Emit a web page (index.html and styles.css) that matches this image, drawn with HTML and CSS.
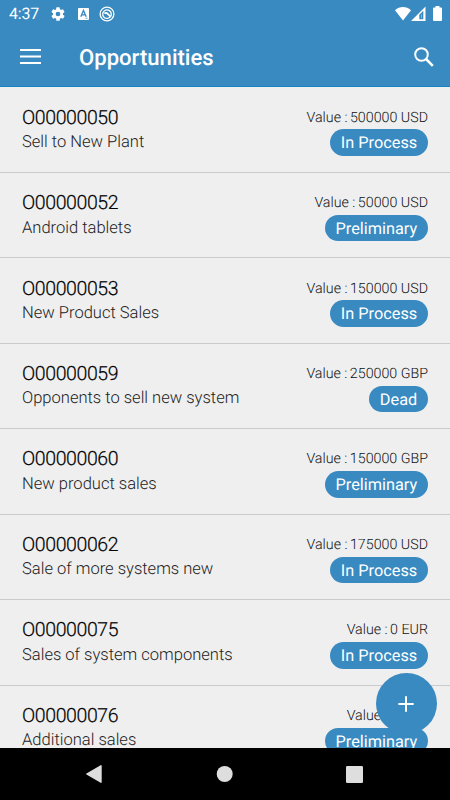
FILE: index.html
```html
<!DOCTYPE html>
<html lang="en">
<head>
    <meta charset="UTF-8">
    <meta name="viewport" content="width=device-width, initial-scale=1.0">
    <title>Opportunities</title>
    <link rel="stylesheet" href="styles.css">
</head>
<body>
    <div class="screen">
        <header class="header">
            <div class="status-bar">
                <span class="clock">4:37</span>
                <div class="notifications">
                    <svg width="16" height="16" viewBox="0 0 24 24" fill="#fff"><path d="M19.4 13a7.500 7.500 0 0 0 0-2l2.100-1.650a.5.5 0 0 0 .12-.64l-2-3.460a.5.5 0 0 0-.61-.22l-2.490 1a7.300 7.300 0 0 0-1.690-.98l-.38-2.650A.5.5 0 0 0 14 2h-4a.5.5 0 0 0-.49.42l-.38 2.650c-.61.25-1.170.58-1.690.98l-2.490-1a.5.5 0 0 0-.61.22l-2 3.460a.5.5 0 0 0 .12.64L4.600 11a7.500 7.500 0 0 0 0 2l-2.110 1.650a.5.5 0 0 0-.12.64l2 3.460c.12.22.39.3.61.22l2.490-1c.52.4 1.080.73 1.690.98l.38 2.650c.03.24.24.42.49.42h4c.25 0 .46-.18.49-.42l.38-2.650a7.300 7.300 0 0 0 1.690-.98l2.490 1c.23.09.49 0 .61-.22l2-3.460a.5.5 0 0 0-.12-.64L19.400 13zM12 15.500a3.500 3.500 0 1 1 0-7 3.500 3.500 0 0 1 0 7z"/></svg>
                    <svg width="11" height="12" viewBox="0 0 11 12"><rect width="11" height="12" rx="1" fill="#fff"/><path d="M2.800 8.800 5.500 2.500l2.700 6.300M3.800 6.800h3.400" fill="none" stroke="#388ac1" stroke-width="1.300"/><path d="M7.500 10.200h2" stroke="#388ac1" stroke-width=".8"/></svg>
                    <svg width="16" height="16" viewBox="0 0 16 16" fill="none" stroke="#fff"><circle cx="8" cy="8" r="6.900" stroke-width="1.300"/><path d="M11.300 10.900A4.300 4.300 0 1 1 12.300 8c0 .8-.2 1.500-.5 2.100" stroke-width="1.300"/><path d="M5.500 7.600c1-1.100 2.200-.8 3 0l3.300 3.300" stroke-width="1.900"/></svg>
                </div>
                <div class="signals">
                    <svg width="16" height="14" viewBox="0 0 16 14"><path d="M0 3.300C4.700-1.100 11.300-1.100 16 3.300L8 13.500z" fill="#fff"/></svg>
                    <svg width="15" height="15" viewBox="0 0 15 15"><path fill-rule="evenodd" d="M0 15 14.500.5V15zM8.300 8.700v4.500h4V4.700z" fill="#fff"/><path d="M10 8.500 11 7.500v4.500h-1z" fill="#fff" opacity=".35"/></svg>
                    <svg class="battery" width="9" height="15" viewBox="0 0 9 15"><path d="M2.500 0h4v1.500H8a1 1 0 0 1 1 1V14a1 1 0 0 1-1 1H1a1 1 0 0 1-1-1V2.500a1 1 0 0 1 1-1h1.500z" fill="#fff"/></svg>
                </div>
            </div>
            <div class="toolbar">
                <svg class="menu" width="21" height="15" viewBox="0 0 21 15"><path d="M0 1.100h21M0 7.500h21M0 13.900h21" stroke="#fff" stroke-width="2"/></svg>
                <h1 class="title">Opportunities</h1>
                <svg class="search" width="20" height="20" viewBox="0 0 20 20" fill="none" stroke="#fff"><circle cx="7.500" cy="7.500" r="6.300" stroke-width="2"/><path d="m12 12 6.800 6.800" stroke-width="2.500"/></svg>
            </div>
        </header>

        <main class="list">
            <div class="row">
                <div class="info">
                    <div class="number">O00000050</div>
                    <div class="name">Sell to New Plant</div>
                </div>
                <div class="details">
                    <div class="value">Value : <span>500000 USD</span></div>
                    <div class="badge">In Process</div>
                </div>
            </div>
            <div class="row">
                <div class="info">
                    <div class="number">O00000052</div>
                    <div class="name">Android tablets</div>
                </div>
                <div class="details">
                    <div class="value">Value : <span>50000 USD</span></div>
                    <div class="badge">Preliminary</div>
                </div>
            </div>
            <div class="row">
                <div class="info">
                    <div class="number">O00000053</div>
                    <div class="name">New Product Sales</div>
                </div>
                <div class="details">
                    <div class="value">Value : <span>150000 USD</span></div>
                    <div class="badge">In Process</div>
                </div>
            </div>
            <div class="row">
                <div class="info">
                    <div class="number">O00000059</div>
                    <div class="name">Opponents to sell new system</div>
                </div>
                <div class="details">
                    <div class="value">Value : <span>250000 GBP</span></div>
                    <div class="badge">Dead</div>
                </div>
            </div>
            <div class="row">
                <div class="info">
                    <div class="number">O00000060</div>
                    <div class="name">New product sales</div>
                </div>
                <div class="details">
                    <div class="value">Value : <span>150000 GBP</span></div>
                    <div class="badge">Preliminary</div>
                </div>
            </div>
            <div class="row">
                <div class="info">
                    <div class="number">O00000062</div>
                    <div class="name">Sale of more systems new</div>
                </div>
                <div class="details">
                    <div class="value">Value : <span>175000 USD</span></div>
                    <div class="badge">In Process</div>
                </div>
            </div>
            <div class="row">
                <div class="info">
                    <div class="number">O00000075</div>
                    <div class="name">Sales of system components</div>
                </div>
                <div class="details">
                    <div class="value">Value : <span>0 EUR</span></div>
                    <div class="badge">In Process</div>
                </div>
            </div>
            <div class="row">
                <div class="info">
                    <div class="number">O00000076</div>
                    <div class="name">Additional sales</div>
                </div>
                <div class="details">
                    <div class="value">Value : <span>0 EUR</span></div>
                    <div class="badge">Preliminary</div>
                </div>
            </div>
        </main>

        <button class="fab" aria-label="Add">
            <svg width="16" height="16" viewBox="0 0 16 16"><path d="M8 .3v15.400M.3 8h15.400" stroke="#fff" stroke-width="2"/></svg>
        </button>

        <nav class="nav-bar">
            <svg width="16" height="18" viewBox="0 0 16 18"><path d="M15 .8v16.400L.8 9z" fill="#dedede" stroke="#dedede" stroke-width="1.400" stroke-linejoin="round"/></svg>
            <svg width="18" height="16" viewBox="0 0 18 16"><circle cx="9.700" cy="8" r="8" fill="#dedede"/></svg>
            <svg width="17" height="17" viewBox="0 0 17 17"><rect width="17" height="17" rx="1.200" fill="#dedede"/></svg>
        </nav>
    </div>
</body>
</html>
```
FILE: styles.css
```css
* {
    box-sizing: border-box;
}

body {
    margin: 0;
    font-family: Roboto, sans-serif;
    text-rendering: geometricPrecision;
    background-color: #efefef;
}

.screen {
    position: relative;
    display: flex;
    flex-direction: column;
    width: 450px;
    height: 800px;
    overflow: hidden;
}

.header {
    height: 87.45px;
    flex-shrink: 0;
    background-color: #388ac1;
    border-bottom: 1px solid #1682c2;
    color: #fff;
}

.status-bar {
    display: flex;
    align-items: center;
    height: 27px;
    padding: 0 8px 0 9px;
}

.clock {
    width: 41px;
    font-size: 16px;
    letter-spacing: -0.2px;
}

.notifications {
    display: flex;
    align-items: center;
    gap: 14px;
}

.notifications svg:first-child {
    margin-right: -2px;
}

.notifications svg:last-child {
    margin-left: -4px;
}

.signals {
    display: flex;
    align-items: center;
    margin-left: auto;
}

.battery {
    margin-left: 7px;
}

.toolbar {
    display: flex;
    align-items: center;
    height: 60px;
    padding: 0 16.5px 0 20px;
}

.menu {
    margin-bottom: 1px;
}

.title {
    margin: 2px 0 0 38px;
    font-size: 22.1px;
    font-weight: 500;
}

.search {
    margin: 0 0 1px auto;
}

.list {
    flex: 1;
    min-height: 0;
    overflow: hidden;
}

.row {
    display: flex;
    justify-content: space-between;
    height: 85.45px;
    padding: 18.3px 22px 0;
    border-bottom: 1px solid #cbcbcb;
}

.number {
    font-size: 19.5px;
    font-weight: 300;
    line-height: 24.4px;
    letter-spacing: -0.4px;
    color: #000;
    -webkit-text-stroke: 0.2px #000;
}

.name {
    font-size: 16.55px;
    font-weight: 300;
    line-height: 26px;
    color: #222;
}

.details {
    display: flex;
    flex-direction: column;
    align-items: flex-end;
}

.value {
    margin-bottom: -1.3px;
    font-size: 14.25px;
    font-weight: 300;
    line-height: 25px;
    color: #111;
}

.value span {
    margin-left: -1px;
}

.badge {
    height: 26.5px;
    padding: 0 10.8px;
    border-radius: 14px;
    background-color: #388ac1;
    color: #fff;
    font-size: 16.3px;
    line-height: 28.5px;
}

.fab {
    position: absolute;
    right: 13.5px;
    bottom: 66px;
    display: flex;
    align-items: center;
    justify-content: center;
    width: 61px;
    height: 61px;
    padding: 0;
    border: none;
    border-radius: 50%;
    background-color: #388ac1;
}

.nav-bar {
    display: flex;
    justify-content: space-between;
    align-items: center;
    height: 52px;
    padding: 0 87px 0 86px;
    background-color: #000;
}
```
